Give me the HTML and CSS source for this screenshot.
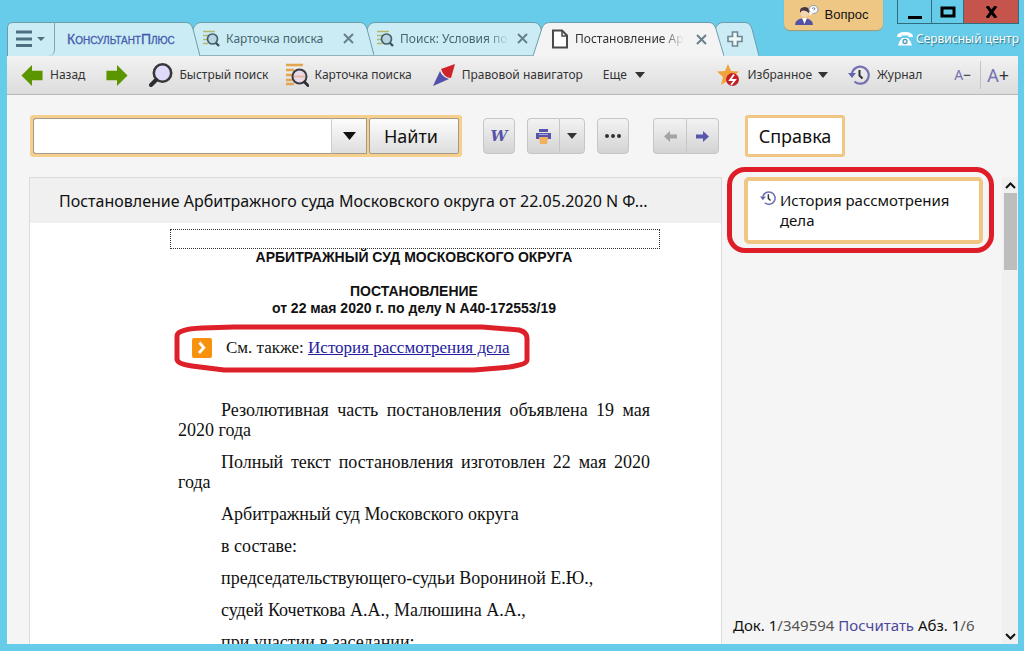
FILE: index.html
```html
<!DOCTYPE html>
<html lang="ru">
<head>
<meta charset="utf-8">
<title>КонсультантПлюс</title>
<link rel="stylesheet" href="styles.css">
</head>
<body>
<svg class="defs" width="0" height="0" aria-hidden="true">
  <symbol id="card" viewBox="0 0 24 24">
    <path d="M1 2h17M1 7h8M1 12h6M1 17h6M1 21h8" stroke="#e0a54e" stroke-width="2.6" fill="none"/>
    <circle cx="14.500" cy="13.500" r="7" fill="#e9dbe6" stroke="#3c3c44" stroke-width="2"/>
    <path d="M9 13.500h11" stroke="#e6b7a4" stroke-width="2"/>
    <path d="M19.500 19l3.500 3.500" stroke="#2e2e34" stroke-width="3" stroke-linecap="round"/>
  </symbol>
  <symbol id="tabcard" viewBox="0 0 17 17">
    <path d="M0 1.500h12M0 5.500h5M0 9.500h4M0 13.500h5" stroke="#b5b76c" stroke-width="1.700" fill="none"/>
    <circle cx="9.500" cy="9" r="5" fill="#b9d4e4" stroke="#44606b" stroke-width="1.700"/>
    <path d="M13 13l3 3" stroke="#3c545e" stroke-width="2.400"/>
  </symbol>
  <symbol id="close" viewBox="0 0 11 11"><path d="M1 1l9 9M10 1l-9 9" stroke="currentColor" stroke-width="2" fill="none"/></symbol>
  <symbol id="down" viewBox="0 0 10 6"><path d="M0 0h10L5 6z" fill="currentColor"/></symbol>
  <symbol id="history" viewBox="0 0 22 20">
    <path d="M4 8A8.500 8.500 0 1 1 6.500 16.500" fill="none" stroke="#7471b3" stroke-width="2.200"/>
    <path d="M0 8h8l-4 5z" fill="#6663ae"/>
    <path d="M11.500 5v5.500l3 3" fill="none" stroke="#333" stroke-width="2"/>
  </symbol>
  <symbol id="arrow" viewBox="0 0 24 24"><path d="M1 12L12 1v6h11v10H12v6z" fill="currentColor"/></symbol>
</svg>

<header class="titlebar">
  <nav class="tabs" aria-label="Вкладки">
    <div class="tab tab-home">
      <svg class="shape" viewBox="0 0 193 34" preserveAspectRatio="none"><path d="M.5 34V6Q.5.500 6 .5H179Q184 .500 186 7L193 34"/></svg>
      <button class="menu" aria-label="Меню">
        <svg width="30" height="18" viewBox="0 0 30 18"><path d="M0 2h16M0 9h16M0 15.500h16" stroke="#4c7080" stroke-width="3"/><path d="M21 7h8l-4 4z" fill="#4c7080"/></svg>
      </button>
      <a class="brand" href="#">КонсультантПлюс</a>
    </div>
    <div class="tab tab-doc">
      <svg class="shape" viewBox="0 0 187 34" preserveAspectRatio="none"><path d="M0 34L6 8Q8 .5 14 .5H173Q178 .500 180 7L187 34"/></svg>
      <svg class="tab-icon" width="17" height="17"><use href="#tabcard"/></svg>
      <a href="#">Карточка поиска</a>
      <button aria-label="Закрыть"><svg width="11" height="11"><use href="#close"/></svg></button>
    </div>
    <div class="tab tab-doc tab-search">
      <svg class="shape" viewBox="0 0 187 34" preserveAspectRatio="none"><path d="M0 34L6 8Q8 .5 14 .5H173Q178 .500 180 7L187 34"/></svg>
      <svg class="tab-icon" width="17" height="17"><use href="#tabcard"/></svg>
      <a class="fade" href="#">Поиск: Условия по</a>
      <button aria-label="Закрыть"><svg width="11" height="11"><use href="#close"/></svg></button>
    </div>
    <div class="tab tab-active">
      <svg class="shape" viewBox="0 0 191 34" preserveAspectRatio="none"><path d="M0 34L9 6Q11 .5 17 .5H176Q181 .500 183 7L191 34"/></svg>
      <svg class="tab-icon" width="16" height="20" viewBox="0 0 16 20"><path d="M1 1.500h9l5 5V18.500H1z" fill="#fff" stroke="#4a4a4a" stroke-width="2"/><path d="M10 1v6h5" fill="none" stroke="#4a4a4a" stroke-width="1.500"/></svg>
      <a class="fade" href="#">Постановление Ар</a>
      <button aria-label="Закрыть"><svg width="11" height="11"><use href="#close"/></svg></button>
    </div>
    <div class="tab tab-new">
      <svg class="shape" viewBox="0 0 49 34" preserveAspectRatio="none"><path d="M0 34L5 8Q7 .5 13 .5H35Q40 .500 42 7L49 34"/></svg>
      <button aria-label="Новая вкладка"><svg width="16" height="16" viewBox="0 0 16 16"><path d="M5.500 1h5v4.500H15v5h-4.500V15h-5v-4.500H1v-5h4.500z" fill="#eef8fb" stroke="#6f8790" stroke-width="1.600"/></svg></button>
    </div>
  </nav>
  <div class="corner">
    <button class="question">
      <svg width="24" height="20" viewBox="0 0 24 20">
        <path d="M0 20q0-5 6-6.500h6q6 1.500 6 6.500z" fill="#5552a6"/><path d="M7 13l2.500 6 2.500-6z" fill="#fff"/>
        <circle cx="9.500" cy="8" r="4" fill="#f4d5b4"/><path d="M5 8q-1-6 5-6 5 0 4 6-3-3-6-2.500-2 0-3 2.500z" fill="#4a3540"/>
        <ellipse cx="18.500" cy="4.500" rx="4.500" ry="4" fill="#fff" stroke="#8597ad"/><path d="M15 7l-1 4 4-3z" fill="#fff"/><path d="M17 3.500q1.500-1.500 3 0 0 1-1.500 1.800" stroke="#6b7790" fill="none"/>
      </svg>
      Вопрос
    </button>
    <div class="corner-right">
      <div class="window-buttons">
        <button aria-label="Свернуть"><svg width="14" height="14"><path d="M0 12.500h14" stroke="#000" stroke-width="3"/></svg></button>
        <button aria-label="Развернуть"><svg width="16" height="12"><path d="M2 2h12v8H2z" fill="none" stroke="#000" stroke-width="3"/></svg></button>
        <button class="win-close" aria-label="Закрыть окно"><svg width="13" height="12"><path d="M2 0l9 12M11 0L2 12" stroke="#000" stroke-width="3"/></svg></button>
      </div>
      <a class="service" href="#">
        <svg width="16" height="14" viewBox="0 0 16 14"><path d="M0 5Q0 0 8 0t8 5H11.500V3.500h-7V5z" fill="#fff"/><path d="M1 13.500q1-4 4-7.500h6q3 3.500 4 7.500z" fill="#fff"/><circle cx="8" cy="9.500" r="2" fill="none" stroke="#4b9db6" stroke-width="1.300"/></svg>
        Сервисный центр
      </a>
    </div>
  </div>
</header>

<div class="toolbar">
  <button class="back"><svg width="24" height="23" class="green"><use href="#arrow"/></svg>Назад</button>
  <button class="forward" aria-label="Вперед"><svg width="24" height="23" class="green flip"><use href="#arrow"/></svg></button>
  <button class="quick"><svg width="24" height="24" viewBox="0 0 24 24"><circle cx="13.500" cy="10" r="8.700" fill="#dedafa" stroke="#38383c" stroke-width="2.600"/><path d="M7 17l-5 5" stroke="#2d2d31" stroke-width="4" stroke-linecap="round"/></svg>Быстрый поиск</button>
  <button class="card"><svg width="24" height="24"><use href="#card"/></svg>Карточка поиска</button>
  <button class="navigator"><svg width="24" height="24" viewBox="0 0 24 24"><path d="M23 1L19 15Q12 15 9 6z" fill="#d0222a"/><path d="M8 8Q10 14 17 16L1 23z" fill="#5350ab"/></svg>Правовой навигатор</button>
  <button class="more">Еще<svg width="10" height="6"><use href="#down"/></svg></button>
  <span class="spacer"></span>
  <button class="favorites"><svg width="24" height="24" viewBox="0 0 24 24"><path d="M11 1l3 7 8 .5-6 5.500 2 8-7-4.500L4 22l2-8-6-5.500L8 8z" fill="#efa33d"/><circle cx="15.500" cy="16.500" r="6.500" fill="#c51f25"/><path d="M17 11.500l-4 5.500h5l-4 5" fill="none" stroke="#fff" stroke-width="1.800"/></svg>Избранное<svg width="10" height="6"><use href="#down"/></svg></button>
  <button class="journal"><svg width="22" height="20"><use href="#history"/></svg>Журнал</button>
  <button class="smaller" aria-label="Уменьшить шрифт"><span>А</span>−</button>
  <button class="larger" aria-label="Увеличить шрифт"><span>А</span>+</button>
</div>

<main class="workspace">
  <section class="left">
    <div class="actions">
      <form class="search">
        <input type="text" aria-label="Поиск">
        <button type="button" class="drop" aria-label="История запросов"><svg width="13" height="8"><use href="#down" width="13" height="8"/></svg></button>
        <button type="button" class="find">Найти</button>
      </form>
      <button class="btn word" aria-label="Экспорт в Word">W</button>
      <div class="group">
        <button class="btn" aria-label="Печать"><svg width="17" height="15" viewBox="0 0 17 15"><path d="M4 0h9v3H4z" fill="#5754ab"/><path d="M1 4h15v6H1z" fill="#5754ab"/><path d="M4 5.500h9" stroke="#aaa8da"/><path d="M4 8h9l-1 7H5z" fill="#f0b15c"/></svg></button>
        <button class="btn" aria-label="Параметры печати"><svg width="10" height="6"><use href="#down"/></svg></button>
      </div>
      <button class="btn dots" aria-label="Другие действия"><svg width="16" height="4"><circle cx="2" cy="2" r="2"/><circle cx="8" cy="2" r="2"/><circle cx="14" cy="2" r="2"/></svg></button>
      <div class="group pager">
        <button class="btn" disabled aria-label="Назад"><svg width="13" height="11" viewBox="0 0 13 11"><path d="M0 5.500L6 0v3.500h7v4H6V11z" fill="#a4a4a4"/></svg></button>
        <button class="btn" aria-label="Далее"><svg width="13" height="11" viewBox="0 0 13 11" class="flip"><path d="M0 5.500L6 0v3.500h7v4H6V11z" fill="#5956ad"/></svg></button>
      </div>
    </div>
    <article class="document">
      <h1>Постановление Арбитражного суда Московского округа от 22.05.2020 N Ф...</h1>
      <div class="page">
        <div class="anchor"></div>
        <h2>АРБИТРАЖНЫЙ СУД МОСКОВСКОГО ОКРУГА</h2>
        <h2 class="kind">ПОСТАНОВЛЕНИЕ<br>от 22 мая 2020 г. по делу N А40-172553/19</h2>
        <div class="see-also">
          <svg width="20" height="20" viewBox="0 0 20 20"><rect width="20" height="20" rx="2" fill="#f7920f"/><path d="M7.500 4.500L11.800 9.800 7 15" fill="none" stroke="#fff" stroke-width="2.800"/></svg>
          <span>См. также: <a href="#">История рассмотрения дела</a></span>
          <svg class="mark" viewBox="0 0 356 50" preserveAspectRatio="none"><path d="M3 12Q3 5 28 4L60 3H308L345 6Q353 8 353 14V36Q353 42 325 44L300 46H50L18 42Q3 40 3 35z"/></svg>
        </div>
        <p>Резолютивная часть постановления объявлена 19 мая 2020 года</p>
        <p>Полный текст постановления изготовлен 22 мая 2020 года</p>
        <p>Арбитражный суд Московского округа</p>
        <p>в составе:</p>
        <p>председательствующего-судьи Ворониной Е.Ю.,</p>
        <p>судей Кочеткова А.А., Малюшина А.А.,</p>
        <p>при участии в заседании:</p>
      </div>
    </article>
  </section>
  <aside class="side">
    <button class="reference">Справка</button>
    <div class="ring">
      <button class="history"><svg width="16" height="16" viewBox="0 0 22 20"><use href="#history"/></svg>История рассмотрения дела</button>
    </div>
    <p class="status">Док. 1<span>/349594</span> <a href="#">Посчитать</a> Абз. 1<span>/6</span></p>
  </aside>
  <div class="scrollbar" aria-hidden="true">
    <svg width="11" height="7"><path d="M1 6l4.500-4.500L10 6" /></svg>
    <div class="thumb"></div>
    <svg width="11" height="7"><path d="M1 1l4.500 4.500L10 1" /></svg>
  </div>
</main>
</body>
</html>
```
FILE: styles.css
```css
* { box-sizing: border-box; }
body {
  margin: 0;
  height: 100vh;
  padding: 0 6px 7px 7px;
  display: flex;
  flex-direction: column;
  overflow: hidden;
  background: #67cce9;
  color: #111;
  font: 12px/16px "Noto Sans", sans-serif;
}
.defs { position: absolute; }
button {
  margin: 0;
  padding: 0;
  border: 0;
  background: none;
  color: inherit;
  font: inherit;
  display: flex;
  align-items: center;
  justify-content: center;
}
a { color: inherit; text-decoration: none; }
svg { flex: none; }
.flip { transform: scaleX(-1); }

/* Title bar */
.titlebar { display: flex; justify-content: space-between; height: 56px; flex: none; }
.tabs { display: flex; align-self: flex-end; height: 34px; }
.tab {
  position: relative;
  display: flex;
  align-items: center;
  color: #48666f;
}
.tab > :not(.shape) { position: relative; }
.tab .shape { position: absolute; inset: 0; width: 100%; height: 100%; }
.shape path { fill: #cbecf5; stroke: #6d9cab; vector-effect: non-scaling-stroke; }
.tab-home { width: 193px; z-index: 3; }
.menu { width: 48px; height: 34px; border-right: 1px solid #7da9b6; border-radius: 0 0 6px 0; }
.brand {
  margin-left: 12px;
  font: 14px/20px "Liberation Sans Narrow", "Liberation Sans", sans-serif;
  font-variant: small-caps;
  color: #3c56a8;
  -webkit-text-stroke: thin #4a63b0;
}
.tab-doc { width: 187px; margin-left: -13px; padding: 0 20px 0 16px; z-index: 2; border-bottom: 1px solid #8fb4bf; }
.tab-search { z-index: 1; }
.tab a:not(.brand) { flex: 1; margin: 0 8px 0 6px; white-space: nowrap; }
.fade { mask-image: linear-gradient(90deg, #000 80%, transparent); }
.tab button { color: #688089; }
.tab-active { width: 191px; margin-left: -15px; padding: 0 22px 0 19px; z-index: 4; color: #333; }
.tab-active .shape path { fill: #f4f4f4; }
.tab.tab-active a.fade { margin: 0 12px 0 7px; }
.tab-new { width: 49px; margin-left: -14px; justify-content: center; }
.corner { display: flex; gap: 14px; align-items: flex-start; margin-right: -1px; }
.question {
  gap: 6px;
  width: 99px;
  height: 30px;
  padding-right: 4px;
  border-radius: 0 0 6px 6px;
  background: #eec785;
  box-shadow: 0 1px 1px #a49873;
  font: 13px/16px "Liberation Sans", sans-serif;
}
.window-buttons { display: flex; height: 24px; border: 1px solid #2e6c80; border-top: 0; }
.window-buttons button { width: 34px; border-right: 1px solid #2e6c80; }
.window-buttons button:nth-child(2) { width: 32px; }
.window-buttons .win-close { flex: 1; border: 0; background: #c5544d; }
.service {
  display: flex;
  align-items: center;
  gap: 3px;
  margin-top: 7px;
  color: #fff;
  white-space: nowrap;
  text-shadow: 1px 1px 1px #2f7388;
}

/* Toolbar */
.toolbar {
  display: flex;
  align-items: center;
  flex: none;
  height: 39px;
  padding: 0 9px 0 13px;
  background: linear-gradient(#f2f2f2, #dcdcdc);
  border-bottom: 1px solid #b9b9b9;
  color: #333;
  white-space: nowrap;
}
.toolbar button { gap: 6px; }
.green { color: #5b9500; }
.toolbar .forward,
.toolbar .quick,
.toolbar .navigator,
.toolbar .journal,
.toolbar .more { margin-left: 20px; }
.toolbar .card { margin-left: 16px; }
.toolbar .more { gap: 8px; }
.spacer { flex: 1; }
.toolbar .journal { gap: 7px; }
.toolbar .smaller { margin-left: 32px; gap: 0; font-size: 14px; }
.toolbar .larger { gap: 0; margin-left: 9px; padding-left: 6px; height: 28px; border-left: 1px solid #c2c2c2; font-size: 18px; }
.smaller span, .larger span { color: #7672b0; }

/* Workspace */
.workspace { display: flex; flex: 1; min-height: 0; background: #f5f5f5; }
.left { display: flex; flex-direction: column; flex: 1; min-width: 0; margin-left: 22px; }
.actions { display: flex; flex: none; margin: 20px 3px 20px 1px; height: 42px; align-items: center; }
.search {
  display: flex;
  flex: 1;
  height: 42px;
  margin-right: 21px;
  padding: 3px;
  border-radius: 3px;
  background: #f6cf8d;
}
.search input { flex: 1; min-width: 0; border: 1px solid #a39b8a; border-right: 0; border-radius: 3px 0 0 3px; background: #fff; padding: 0 8px; font: 16px/20px "Noto Sans", sans-serif; outline: 0; }
.drop { width: 36px; border: 1px solid #a39b8a; border-left-color: #ccc; background: linear-gradient(#fcfcfc, #dedede); }
.search .find { width: 90px; margin-left: 2px; padding-right: 6px; border: 1px solid #a39b8a; border-radius: 2px; background: linear-gradient(#fcfcfc, #dedede); font-size: 18px; }
.btn { width: 32px; height: 36px; border: 1px solid #c6c6c6; border-radius: 4px; background: linear-gradient(#f3f3f3, #d3d3d3); }
.word { color: #5653ab; font: italic bold 15px/20px "DejaVu Serif", serif; }
.group { display: flex; margin: 0 12px; color: #333; }
.group .btn:first-child { border-radius: 4px 0 0 4px; border-right: 0; }
.group .btn:last-child { border-radius: 0 4px 4px 0; width: 26px; }
.group.pager { margin: 0 0 0 24px; }
.group.pager .btn { width: 33px; }
.dots { fill: #333; }
.document { flex: 1; min-height: 0; overflow: hidden; border: 1px solid #dcdcdc; border-bottom: 0; background: #fff; }
h1 {
  margin: 0;
  padding: 13px 29px 12px;
  background: #f0f0f0;
  font-weight: 400;
  font-size: 16px;
  line-height: 20px;
  white-space: nowrap;
}
.page { padding: 6px 71px 0 148px; font: 18px/20px "Liberation Serif", serif; }
.anchor { height: 20px; margin: 0 -10px 0 -8px; border: 1px dotted #333; }
h2 { margin: 0; font: bold 14px/17px "Liberation Sans", sans-serif; text-align: center; }
.kind { margin: 17px 0 21px; }
.see-also { position: relative; display: flex; align-items: center; gap: 14px; margin: 0 0 42px 14px; font-size: 17px; }
.see-also a { color: #2420a0; text-decoration: underline; }
.mark { position: absolute; left: -18px; top: -14px; width: 356px; height: 50px; pointer-events: none; }
.mark path { fill: none; stroke: #dd2029; stroke-width: 5; }
.page p { margin: 0 0 12px; text-indent: 43px; text-align: justify; }

/* Side panel */
.side { display: flex; flex-direction: column; align-items: flex-start; width: 280px; padding: 20px 0 9px 5px; font-size: 15px; line-height: 20px; }
.side .reference { width: 100px; height: 42px; margin-left: 18px; border: 3px solid #efc684; border-radius: 3px; background: #fff; font-size: 18px; }
.ring { width: 267px; margin-top: 10px; padding: 5px 6px 4px 12px; border: 5px solid #de1d28; border-radius: 18px; }
.ring .history {
  width: 100%;
  height: 67px;
  padding: 9px 24px 0 12px;
  gap: 4px;
  align-items: flex-start;
  justify-content: flex-start;
  text-align: left;
  border: 4px solid #efc684;
  border-radius: 5px;
  background: #fff;
}
.status { margin: auto 0 0 6px; white-space: nowrap; }
.status span { color: #555; }
.status a { color: #4b489c; }
.scrollbar { display: flex; flex-direction: column; align-items: center; width: 16px; margin-top: 82px; padding: 5px 0 4px; background: #f0f0f0; }
.scrollbar svg { fill: none; stroke: #111; stroke-width: 2; }
.thumb { width: 13px; height: 77px; margin: 4px 0 auto; background: #bdbdbd; }
```
